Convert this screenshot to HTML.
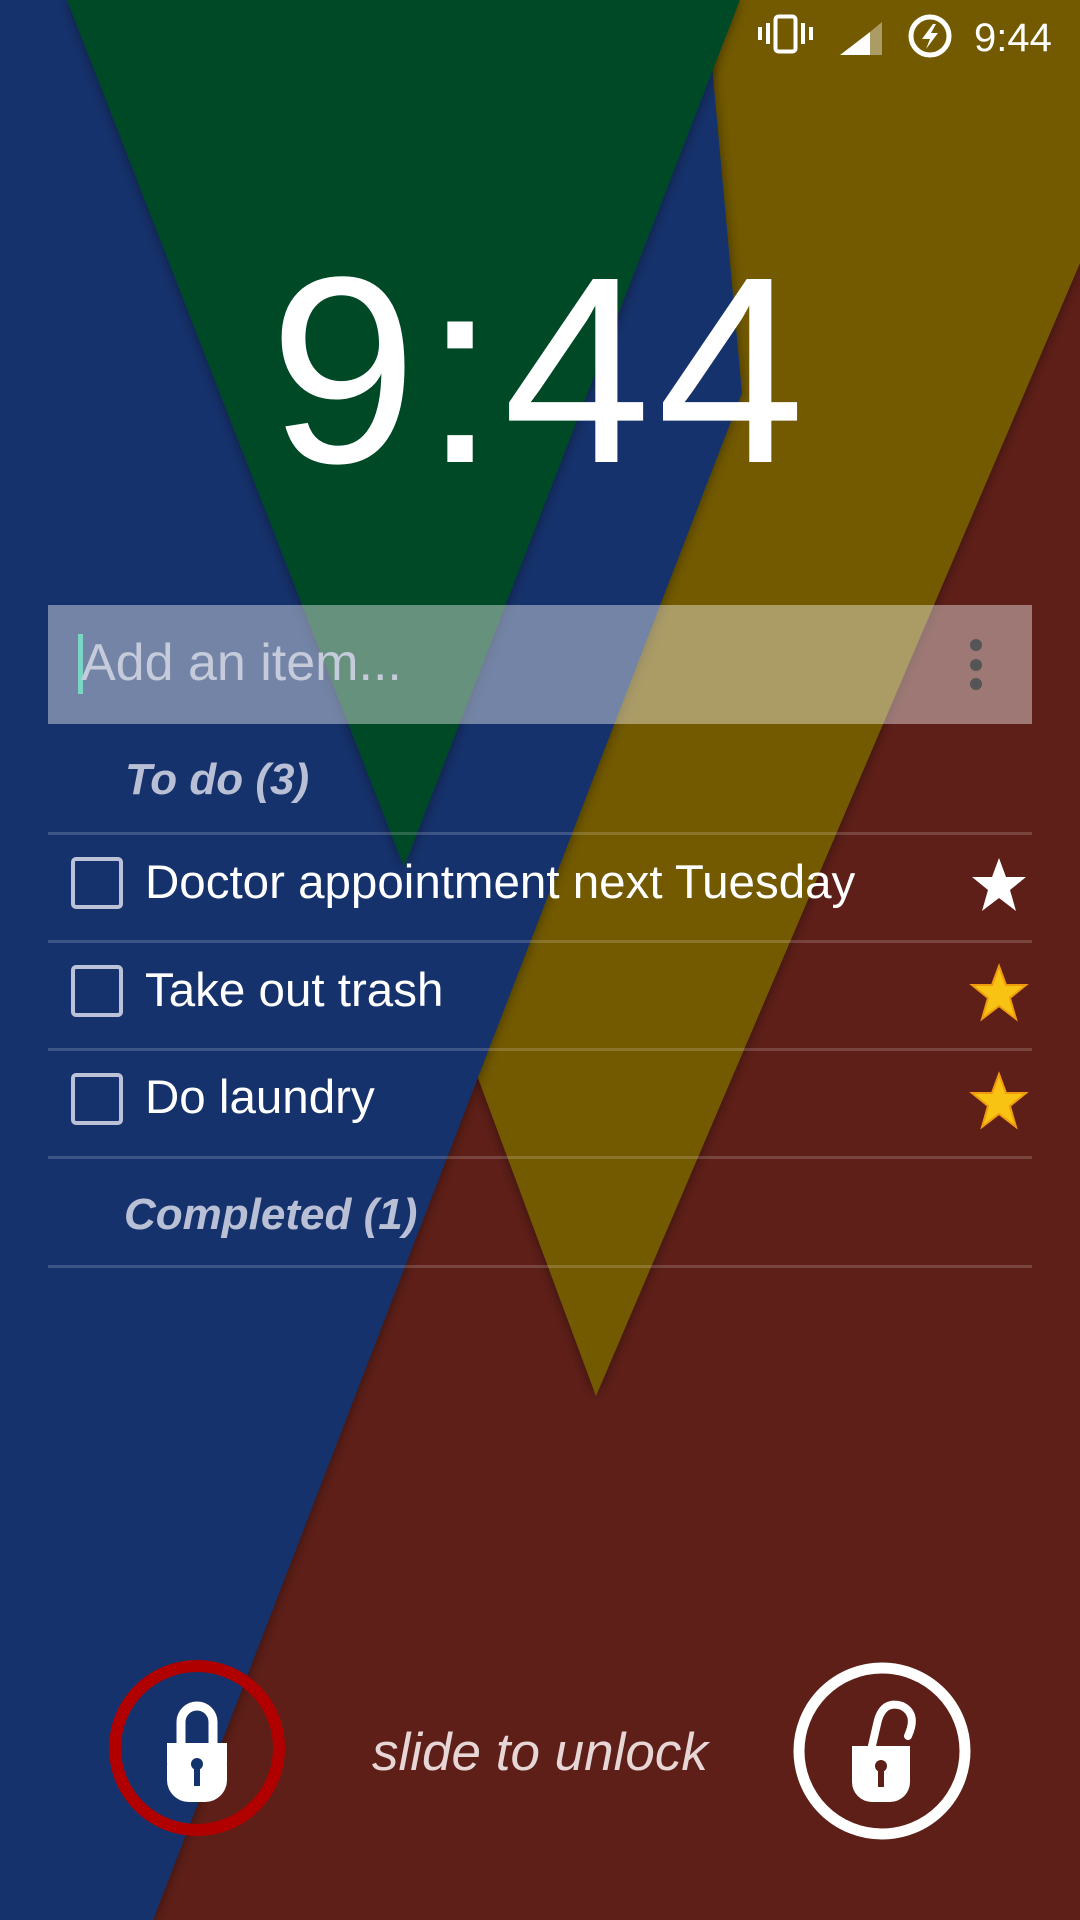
<!DOCTYPE html>
<html><head><meta charset="utf-8"><style>
html,body{margin:0;padding:0;width:1080px;height:1920px;overflow:hidden;background:#5e1f18;font-family:"Liberation Sans",sans-serif}
.abs{position:absolute}
.t{position:absolute;white-space:nowrap}
.div{position:absolute;left:48px;width:984px;height:3px;background:rgba(255,255,255,0.17)}
.cb{position:absolute;left:71px;width:44px;height:44px;border:4px solid #bcc3d8;border-radius:5px}
.row{position:absolute;left:145px;color:#fff;font-size:47.5px;line-height:50px}
.hdr{position:absolute;color:#b9c0d6;font-size:44px;font-weight:bold;font-style:italic;line-height:50px}
</style></head><body>
<svg class="abs" style="left:0;top:0" width="1080" height="1920">
<defs><filter id="sh" x="-20%" y="-20%" width="140%" height="140%"><feDropShadow dx="0" dy="0" stdDeviation="6" flood-color="#000" flood-opacity="0.45"/></filter></defs>
<rect width="1080" height="1920" fill="#5e1f18"/>
<polygon points="78,0 1080,0 1080,263 596,1396" fill="#735a02" filter="url(#sh)"/>
<polygon points="0,0 706,0 742,393 153,1920 0,1920" fill="#12336c" filter="url(#sh)"/>
<polygon points="67,0 740,0 404,867" fill="#004828" filter="url(#sh)"/>
</svg>

<!-- status bar -->
<svg class="abs" style="left:755px;top:10px" width="220" height="55">
<rect x="3" y="17" width="4" height="13" fill="#fff"/>
<rect x="11" y="13" width="4" height="21" fill="#fff"/>
<rect x="20.5" y="6.5" width="20" height="35" rx="3" fill="none" stroke="#fff" stroke-width="4"/>
<rect x="46" y="13" width="4" height="21" fill="#fff"/>
<rect x="54" y="17" width="4" height="13" fill="#fff"/>
<polygon points="85,45 115,45 115,22" fill="#fff"/>
<polygon points="115,45 127,45 127,12 115,22" fill="#fff" opacity="0.4"/>
<circle cx="175" cy="26" r="19" fill="none" stroke="#fff" stroke-width="5"/>
<polygon points="178,14 167,29 175,29 171,39 183,23 176,23 181,14" fill="#fff"/>
</svg>
<div class="t" style="left:974px;top:14px;color:#fff;font-size:40px;line-height:48px">9:44</div>

<!-- big clock -->
<div class="t" style="left:0;width:1080px;text-align:center;top:236px;color:#fff;font-size:266px;line-height:270px;letter-spacing:6px">9:44</div>

<!-- input -->
<div class="abs" style="left:48px;top:605px;width:984px;height:119px;background:rgba(255,255,255,0.4)"></div>
<div class="abs" style="left:78px;top:634px;width:5px;height:60px;background:#79d6c4"></div>
<div class="t" style="left:81px;top:634px;color:#c5cbdb;font-size:52px;line-height:58px">Add an item...</div>
<div class="abs" style="left:970px;top:639px;width:12px;height:12px;border-radius:6px;background:#555"></div>
<div class="abs" style="left:970px;top:659px;width:12px;height:12px;border-radius:6px;background:#555"></div>
<div class="abs" style="left:970px;top:678px;width:12px;height:12px;border-radius:6px;background:#555"></div>

<div class="hdr" style="left:125px;top:755px">To do (3)</div>
<div class="div" style="top:832px"></div>
<div class="cb" style="top:857px"></div>
<div class="row" style="top:858px">Doctor appointment next Tuesday</div>
<div class="div" style="top:940px"></div>
<div class="cb" style="top:965px"></div>
<div class="row" style="top:966px">Take out trash</div>
<div class="div" style="top:1048px"></div>
<div class="cb" style="top:1073px"></div>
<div class="row" style="top:1073px">Do laundry</div>
<div class="div" style="top:1156px"></div>
<div class="hdr" style="left:124px;top:1190px">Completed (1)</div>
<div class="div" style="top:1265px"></div>

<svg class="abs" style="left:968px;top:855px" width="62" height="60"><polygon points="31,3 38,22 58,22 42,35 48,56 31,43 14,56 20,35 4,22 24,22" fill="#fff"/></svg>
<svg class="abs" style="left:968px;top:963px" width="62" height="60"><polygon points="31,3 38,22 58,22 42,35 48,56 31,43 14,56 20,35 4,22 24,22" fill="#f8c313" stroke="#f09a10" stroke-width="2"/></svg>
<svg class="abs" style="left:968px;top:1071px" width="62" height="60"><polygon points="31,3 38,22 58,22 42,35 48,56 31,43 14,56 20,35 4,22 24,22" fill="#f8c313" stroke="#f09a10" stroke-width="2"/></svg>

<!-- bottom -->
<svg class="abs" style="left:0;top:1640px" width="1080" height="240">
<circle cx="197" cy="108" r="82" fill="none" stroke="#b00000" stroke-width="12"/>
<path d="M181,104 V82 a16,16 0 0 1 32,0 V104" fill="none" stroke="#fff" stroke-width="9"/>
<rect x="167" y="103" width="60" height="59" rx="22" fill="#fff"/>
<rect x="167" y="103" width="60" height="20" fill="#fff"/>
<circle cx="197" cy="124" r="6" fill="#12336c"/>
<rect x="194" y="124" width="6" height="22" fill="#12336c"/>
<circle cx="882" cy="111" r="83" fill="none" stroke="#fff" stroke-width="11"/>
<path d="M871,110 L878,80 Q884,60 902,66 Q918,74 908,96" fill="none" stroke="#fff" stroke-width="8" stroke-linecap="round"/>
<rect x="852" y="106" width="58" height="56" rx="20" fill="#fff"/>
<rect x="852" y="106" width="58" height="20" fill="#fff"/>
<circle cx="881" cy="126" r="6" fill="#5e1f18"/>
<rect x="878" y="126" width="6" height="21" fill="#5e1f18"/>
</svg>
<div class="t" style="left:372px;top:1723px;color:#e6d6d6;font-size:53px;font-style:italic;line-height:60px">slide to unlock</div>
</body></html>
